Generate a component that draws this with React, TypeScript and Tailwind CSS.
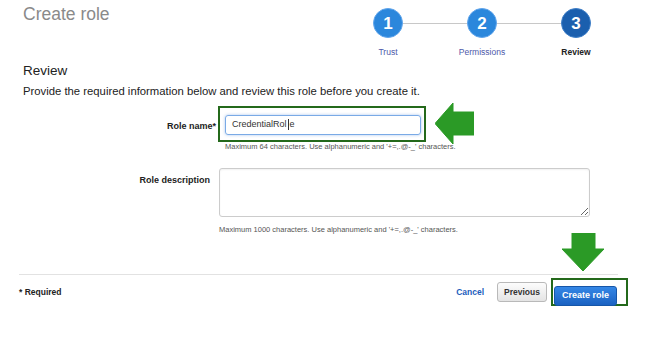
import React from "react";

interface StepProps {
  n: number;
  label: string;
  active?: boolean;
}

const Step = ({ n, label, active }: StepProps) => {
  return (
    <div className="relative z-10 flex flex-col items-center w-[94px]">
      <div
        className={
          active
            ? "w-[30px] h-[30px] rounded-full flex items-center justify-center bg-[#1b5fae] border-[1.5px] border-[#3f7fc8] text-white font-bold text-[17px] leading-none"
            : "w-[30px] h-[30px] rounded-full flex items-center justify-center bg-[#2b87dc] border-[1.5px] border-[#62a6ec] text-white font-bold text-[17px] leading-none"
        }
      >
        {n}
      </div>
      <span
        className={
          active
            ? "mt-[9px] text-[8.5px] leading-[10px] font-bold text-[#222]"
            : "mt-[9px] text-[8.5px] leading-[10px] text-[#4d58a9]"
        }
      >
        {label}
      </span>
    </div>
  );
};

const ArrowLeft = () => (
  <svg width="39" height="41" viewBox="0 0 39 41" className="ml-[9px] shrink-0">
    <path d="M0 20.5 L18 0 L18 9 L39 9 L39 32 L18 32 L18 41 Z" fill="#2b9a26" strokeLinejoin="round" stroke="#2b9a26" strokeWidth="1" />
  </svg>
);

const ArrowDown = () => (
  <svg width="42" height="38" viewBox="0 0 42 38" className="shrink-0 mt-[8px]">
    <path d="M10 0 H33 V16 H42 L21 38 L0 16 H10 Z" fill="#2b9a26" strokeLinejoin="round" stroke="#2b9a26" strokeWidth="1" />
  </svg>
);

export default function App() {
  return (
    <div
      className="w-[650px] h-[338px] bg-white overflow-hidden text-[#333]"
      style={{ fontFamily: '"Liberation Sans", Arial, sans-serif' }}
    >
      {/* header */}
      <div className="flex justify-between h-[63px]">
        <h1 className="pl-[23px] pt-[3px] text-[17.5px] leading-[22px] text-[#8a8a8a]">Create role</h1>
        <div className="relative flex pt-[8px] mr-[27px]">
          <div className="absolute left-[47px] right-[47px] top-[22.5px] h-[1.5px] bg-[#c8c8c8]" />
          <Step n={1} label="Trust" />
          <Step n={2} label="Permissions" />
          <Step n={3} label="Review" active />
        </div>
      </div>

      <div className="pl-[23px]">
        <h2 className="text-[13.5px] leading-[16px] text-[#222]">Review</h2>
        <p className="mt-[5px] text-[11.3px] leading-[14px] text-[#222]">
          Provide the required information below and review this role before you create it.
        </p>
      </div>

      {/* role name */}
      <div className="flex items-center mt-[5px]">
        <label className="w-[216px] text-right text-[9px] font-bold text-[#222] pt-[6px]">Role name*</label>
        <div className="ml-[2px] w-[208px] h-[36px] border-2 border-[#24691b] pl-[5px] pr-[3px] pt-[7px] pb-[5px]">
          <div className="h-[20px] border border-[#7aaae6] rounded-[3px] shadow-[0_0_3px_rgba(80,140,220,0.5)] flex items-center pl-[6px] text-[9px] text-[#333]">
            CredentialRol<span className="inline-block w-[1px] h-[11px] bg-[#333] mx-[1px]" />e
          </div>
        </div>
        <ArrowLeft />
      </div>
      <p className="ml-[225px] -mt-[2px] text-[7.5px] leading-[9px] text-[#555]">
        Maximum 64 characters. Use alphanumeric and '+=,.@-_' characters.
      </p>

      {/* role description */}
      <div className="flex items-start mt-[17px]">
        <label className="w-[210px] text-right text-[9px] font-bold text-[#222] pt-[6px]">Role description</label>
        <textarea className="ml-[9px] w-[371px] h-[49px] border border-[#ccc] rounded-[3px] shadow-[inset_0_1px_2px_rgba(0,0,0,0.06)] outline-none" />
      </div>
      <div className="flex items-start mt-[8px] pr-[46px]">
        <p className="ml-[219px] text-[7.5px] leading-[9px] text-[#555]">
          Maximum 1000 characters. Use alphanumeric and '+=,.@-_' characters.
        </p>
        <div className="ml-auto">
          <ArrowDown />
        </div>
      </div>

      {/* footer */}
      <div className="mx-[19px] w-[599px] mt-[3px] h-[1px] bg-[#e2e2e2]" />
      <div className="flex items-center mt-[3px] pl-[19px] pr-[22px]">
        <span className="text-[8.5px] font-bold text-[#222]">* Required</span>
        <div className="ml-auto flex items-center">
          <a className="text-[8.5px] font-bold text-[#1c5dbd] mr-[13px]">Cancel</a>
          <button className="h-[20px] w-[50px] border border-[#b9b9b9] rounded-[3px] bg-gradient-to-b from-[#fcfcfc] to-[#e4e4e4] text-[8.5px] font-bold text-[#333]">
            Previous
          </button>
          <div className="ml-[4px] w-[77px] h-[28px] border-2 border-[#24691b] pl-[1px] pt-[1px]">
            <button className="h-[20px] w-[63px] border border-[#1656a8] rounded-[3px] bg-gradient-to-b from-[#3587e6] to-[#1b62c2] text-[9px] font-bold text-white">
              Create role
            </button>
          </div>
        </div>
      </div>
    </div>
  );
}
